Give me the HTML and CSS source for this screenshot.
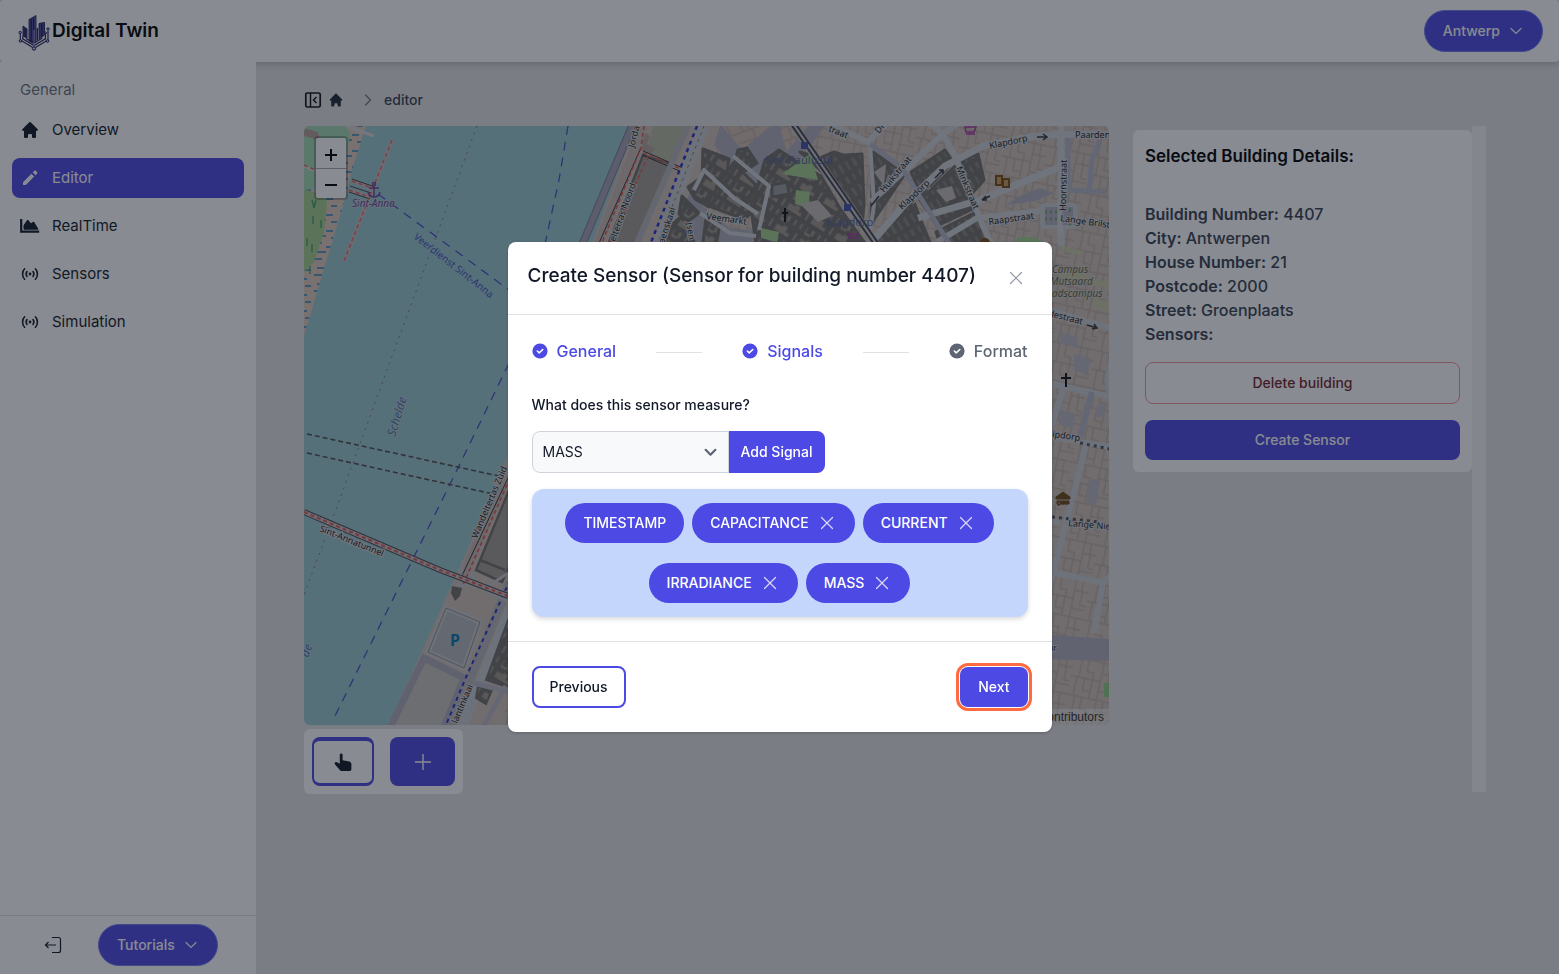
FILE: index.html
```html
<!DOCTYPE html>
<html lang="en">
<head>
<meta charset="utf-8">
<title>Digital Twin</title>
<link rel="stylesheet" href="styles.css">
</head>
<body>
<svg class="defs" width="0" height="0" aria-hidden="true">
  <symbol id="home" viewBox="0 0 20 20"><path d="M10.7 2.3a1 1 0 0 0-1.4 0l-7 7a1 1 0 0 0 1.4 1.4L4 10.4V17a1 1 0 0 0 1 1h2a1 1 0 0 0 1-1v-2a1 1 0 0 1 1-1h2a1 1 0 0 1 1 1v2a1 1 0 0 0 1 1h2a1 1 0 0 0 1-1v-6.6l.3.3a1 1 0 0 0 1.4-1.4l-7-7z" fill="currentColor"/></symbol>
  <symbol id="pencil" viewBox="0 0 20 20"><path d="M13.6 3.6a2 2 0 1 1 2.8 2.8l-.8.8-2.8-2.8.8-.8zM11.4 5.8 3 14.2V17h2.8l8.4-8.4-2.8-2.8z" fill="currentColor"/></symbol>
  <symbol id="chart" viewBox="0 0 20 20"><path d="M1.2 3v12.6h18" fill="none" stroke="currentColor" stroke-width="2.2"/><path d="M4 13.2V9.4L7.7 4l3.2 3.8 2.8-1.8L18 13.2z" fill="currentColor" stroke="currentColor" stroke-linejoin="round"/></symbol>
  <symbol id="signal" viewBox="0 0 20 20"><g fill="none" stroke="currentColor" stroke-width="1.6" stroke-linecap="round"><path d="M4.6 4.8a7.6 7.6 0 0 0 0 10.4M15.400 4.800a7.600 7.600 0 0 1 0 10.400M7 7.600a3.900 3.900 0 0 0 0 4.800M13 7.600a3.900 3.900 0 0 1 0 4.800"/></g><circle cx="10" cy="10" r="1.400" fill="currentColor"/></symbol>
  <symbol id="chevron" viewBox="0 0 16 16"><path d="m3 5.500 5 5 5-5" fill="none" stroke="currentColor" stroke-width="1.200" stroke-linecap="round"/></symbol>
  <symbol id="cross" viewBox="0 0 14 14"><path d="m1.500 1.500 11 11m0-11-11 11" fill="none" stroke="currentColor" stroke-width="1.200" stroke-linecap="round"/></symbol>
  <symbol id="check" viewBox="0 0 16 16"><circle cx="8" cy="8" r="7.600" fill="currentColor"/><path d="m5.300 8 1.900 1.900 3.600-3.400" fill="none" stroke="#fff" stroke-width="1.500" stroke-linecap="round" stroke-linejoin="round"/></symbol>
</svg>

<div class="app">
  <header class="topbar">
    <a class="brand" href="#">
      <svg class="logo" viewBox="0 0 32 36" aria-hidden="true">
        <path d="M11 4.500 18 .5V27l-2.500 1.500L11 26z" fill="#5a57b0" stroke="#1d1b52" stroke-width=".8"/>
        <path d="M13.200 4v23M15.500 2.600v25" stroke="#1d1b52" stroke-width="1.400"/>
        <path d="M5 11l4 3v9l-4-2zM21 8.500l5.500-1V20L21 24z" fill="#4a479c" stroke="#1d1b52" stroke-width=".9"/>
        <path d="M7 13v9M23.800 8.500V22M19.300 13v12" stroke="#1d1b52" stroke-width="1.300"/>
        <path d="M2.300 18v7L16 33.200 30 25v-9M4.800 21v2.800L16 30.500l11.400-6.700V18M8 23.500l8 4.500 8.500-5" fill="none" stroke="#24215e" stroke-width="1.200"/>
        <path d="M16 15v18" stroke="#b9b8ea" stroke-width=".8"/>
        <g fill="#c9c9ea" stroke="#24215e"><circle cx="2.200" cy="17.500" r="1.200"/><circle cx="30" cy="14" r="1.200"/><circle cx="27.500" cy="18" r="1"/><circle cx="2.500" cy="26" r="1.300"/><circle cx="29.500" cy="26" r="1.300"/><circle cx="16" cy="33.500" r="1.700"/></g>
      </svg>
      <span>Digital Twin</span>
    </a>
    <button class="pill" type="button">Antwerp <svg class="i16"><use href="#chevron"/></svg></button>
  </header>

  <aside class="sidebar">
    <nav class="nav" aria-label="Main">
      <h2>General</h2>
      <a href="#"><svg class="i20"><use href="#home"/></svg>Overview</a>
      <a href="#" class="active" aria-current="page"><svg class="i20"><use href="#pencil"/></svg>Editor</a>
      <a href="#"><svg class="i20"><use href="#chart"/></svg>RealTime</a>
      <a href="#"><svg class="i20"><use href="#signal"/></svg>Sensors</a>
      <a href="#"><svg class="i20"><use href="#signal"/></svg>Simulation</a>
    </nav>
    <div class="side-foot">
      <button class="bare" type="button" aria-label="Log out"><svg class="i18" viewBox="0 0 18 18"><path d="M8 1.500h6.500a2 2 0 0 1 2 2v11a2 2 0 0 1-2 2H8M1.500 9H12M4.500 6l-3 3 3 3" fill="none" stroke="currentColor" stroke-width="1.200"/></svg></button>
      <button class="pill" type="button">Tutorials <svg class="i16"><use href="#chevron"/></svg></button>
    </div>
  </aside>

  <main class="main">
    <nav class="crumbs" aria-label="Breadcrumb">
      <button class="bare" type="button" aria-label="Collapse sidebar"><svg class="i18" viewBox="0 0 18 18"><rect x="1.800" y="2" width="14.400" height="14" rx="1.500" fill="none" stroke="#111" stroke-width="1.700"/><path d="M6.500 2v14" stroke="#111" stroke-width="1.500"/><path d="M12.500 6 9.500 9l3 3" fill="none" stroke="#111" stroke-width="1.500"/></svg></button>
      <a class="home" href="#" aria-label="Home"><svg class="i16"><use href="#home"/></svg></a>
      <svg class="i16 sep"><use href="#chevron"/></svg>
      <span>editor</span>
    </nav>
    <div class="workspace">
      <section class="map-col">
        <div class="map">
<svg class="tiles" viewBox="304 126 805 599" preserveAspectRatio="xMidYMid slice" role="img" aria-label="Map of Antwerp">
  <defs>
    <pattern id="mud" width="26" height="16" patternUnits="userSpaceOnUse"><path d="M2 3h8M14 7h7M5 12h9M19 14h6" stroke="#2f86c0" stroke-width="1.300"/></pattern>
    <pattern id="parcel" width="44" height="38" patternUnits="userSpaceOnUse" patternTransform="rotate(12)"><path d="M0 1H44M0 20H30M8 1V20M15 1V13H22V20M30 1V38M37 1V12H44M30 12H38V26H44M6 20V38M14 20V32H22V38M22 20V32M30 30H44" fill="none" stroke="#b3a298" stroke-width="1"/></pattern>
    <pattern id="parcel2" width="34" height="40" patternUnits="userSpaceOnUse" patternTransform="rotate(-20)"><path d="M0 1H34M7 1V18M14 1V18M21 1V18M28 1V18M0 18H34M17 18V40M0 28H17M17 32H34" fill="none" stroke="#b3a298" stroke-width="1"/></pattern>
    <pattern id="dark" width="28" height="24" patternUnits="userSpaceOnUse" patternTransform="rotate(32)"><rect width="28" height="24" fill="#a0978c"/><path d="M0 2H28M0 13H18M5 0V13M12 2V24M19 0V24M25 0V10M19 15H28M5 18H12" fill="none" stroke="#706f6b" stroke-width="5"/></pattern>
    <pattern id="dark2" width="15" height="26" patternUnits="userSpaceOnUse" patternTransform="rotate(-30)"><rect width="15" height="26" fill="#8c877f"/><path d="M0 2H15M0 14H15M3 0V26M10 0V26" fill="none" stroke="#706f6b" stroke-width="5"/></pattern>
  </defs>
  <rect x="304" y="126" width="805" height="599" fill="#9bc8d1"/>

  <!-- left bank -->
  <path d="M304 126h62l-14 44-8 32-40 134z" fill="#decabd"/>
  <path d="M304 126h62l-14 44-8 32-40 134z" fill="url(#mud)"/>
  <path d="M304 126h42l4 8-5 32-20 22-21 2z" fill="#a5d8b4"/>
  <path d="M304 128l14 4 2 8-16-4z" fill="#b79f98"/>
  <path d="M304 190l12 2 11 8-3 32-10 30-10 10z" fill="#a5cf8c"/>
  <path d="M312 200l2 8 2-8m-3 16v8m8-4v8m-14 10v8m5-2v8m-2 14v8" stroke="#46996a" stroke-width="1.300" fill="none"/>
  <path d="M304 166l14 6m28-46l28 10" stroke="#d8d4d8" stroke-width="3"/>
  <path d="M392 140l-48 121M352 181l23 8m-26 1l21 7" stroke="#c6bdc2" stroke-width="4" fill="none"/>
  <path d="M352 179l23 8m-26 5l21 7m-20-13l21 7" stroke="#444" stroke-width="1" fill="none"/>
  <path d="M392 140l-48 121M352 181l23 8m-26 1l21 7M304 165l14 6" stroke="#e4655f" stroke-width="1.400" stroke-dasharray="4 3" fill="none"/>

  <!-- river routes -->
  <path d="M477 126L398 340 335 512 304 595" stroke="#856f93" stroke-width="1" stroke-dasharray="2 5" fill="none"/>
  <path d="M378 194L520 298M568 126l-9 54-18 82M530 320L457 470 332 722" stroke="#4a50c4" stroke-width="1.300" stroke-dasharray="9 7" fill="none"/>
  <path d="M307 434l210 46M307 453l200 44" stroke="#514d50" stroke-width="1.600" stroke-dasharray="5 3" fill="none"/>

  <!-- right bank -->
  <path d="M635 126H1109V725H388L420 655 463 560 508 455 560 330z" fill="#d0c3bb"/>
  <path d="M725 126H1109V725H500L600 420z" fill="url(#parcel)"/>
  <path d="M632 126l-52 124" stroke="#7d7b91" stroke-width="8"/><path d="M632 126l-52 124" stroke="#a6a3b4" stroke-width="6"/>
  <path d="M653 126h38l-18 36-27-9z" fill="#b8baa4"/>
  <path d="M645 132l5 4-3 8 8 4-4 6-10-4z" fill="#b5a69c"/>
  <path d="M644 126L596 250M508 475L461 580" stroke="#c8b8b2" stroke-width="9"/>
  <path d="M643 155l28 9-38 86h-27z" fill="#a39d96" stroke="#706f6b" stroke-width="2.500"/>
  <path d="M514 478l-38 92 26 12 20-44zM480 560l25 10" fill="#a39d96" stroke="#706f6b" stroke-width="2.500"/>
  <path d="M640 150L596 250M508 478L460 580M643 151l40 17M642 155l40 17" stroke="#333" stroke-width="1" fill="none"/>
  <path d="M644 126l-3 22-42 102M648 156l-42 94M643 153l38 16M510 478L463 585" stroke="#e05850" stroke-width="1.600" stroke-dasharray="4 3" fill="none"/>
  <path d="M704 126L655 250" stroke="#c9ccd0" stroke-width="11"/>
  <path d="M688 126L634 250" stroke="#b6b4bc" stroke-width="6"/>
  <path d="M697 126L648 250" stroke="#2c33c9" stroke-width="2.500" stroke-dasharray="4 4"/>
  <path d="M704 126L655 250" stroke="#8a7377" stroke-width="1" stroke-dasharray="3 4"/>
  <path d="M720 126h105l-18 25-34 42-25-10-34-38z" fill="#b0afbf"/>
  <path d="M722 126h48l-28 24z M780 126h28l-22 26z" fill="#d0bfb3"/>
  <path d="M722 126h48l-28 24z M780 126h28l-22 26z" fill="url(#parcel2)"/>
  <path d="M668 250l22-58 20 22 20 14 25 3-4 20z" fill="#aeadbd"/>

  <!-- highlighted buildings -->
  <g stroke="#706f6b" stroke-width="3" stroke-linejoin="round" fill="url(#dark)">
    <path d="M703 149l26 10-4 24-16 24-14-8-7-12 14-10z"/>
    <path d="M738 150l9-2 10 15-12 8-10-10zM733 163l23 22-2 26-10 8-38-14z"/>
    <path d="M682 196l17 17-12 9-8-8zM668 228l14-12 12 26-4 8h-28zM706 218l14 6-4 22-14 4z"/>
    <path d="M765 160l14-10 18 12 24 14 20 34 26 36-10 6h-100l-6-44z"/>
    <path d="M800 152l20 18 40 40-4-50-22-8-14 6z"/>
  </g>
  <g stroke="#706f6b" stroke-width="3" stroke-linejoin="round" fill="url(#dark2)">
    <path d="M830 156l32-2 2 50-2 22-30-50zM873 152l32 22-34 50zM911 172l34-22 8 12-32 33zM879 232l34-32 20 50h-60zM920 200l35-34 20 42-38 18zM960 160l18-6 6 26-16 18zM936 232l40-20 16 38h-50z"/>
  </g>
  <path d="M772 185l15-3 2 12-17 3z" fill="#9a9ea3" stroke="#706f6b" stroke-width="3"/>
  <path d="M782 174l28-20 8 26zM796 190l14 2-2 16-13-4zM761 228l18 4-2 10-16-4z" fill="#a5cf8c"/>
  <path d="M874 172l12-8-2 22zM936 190l16-4 4 12-10 4zM800 204l18-4 14 16-14 6z" fill="#c4bdb9"/>

  <!-- streets -->
  <g fill="none" stroke="#ced0d5" stroke-linejoin="round">
    <path stroke-width="7" d="M865 250l40-46 40-38 38-20 47-9 30-3 50 1M1061 126v120M1062 166l-82 34-62 18"/>
    <path stroke-width="6" d="M830 124l38 18 18-18M943 134l13 24 26 66 12 26M925 120l18 14 15-10M943 134l-72 68M937 242l40-24 64-7M1040 210h28"/>
    <path stroke-width="4" d="M694 190l10-20 30 28 24 16M733 156l36 30-10 44M700 213l30 20 26 3M870 143l4 62-4 26"/>
    <path stroke-width="5" stroke="#b4b5c5" d="M870 144l32 24 50 80M1068 138v52l38 2M1100 140l-8 20-3 30"/>
  </g>
  <path d="M790 120L880 250" stroke="#c6c6cd" stroke-width="8"/>
  <path d="M788 120L878 250M793 120L883 250" stroke="#45444a" stroke-width="2"/>
  <path d="M801 142h7v7h-7zM844 204h7v7h-7z" fill="#4550a8"/>
  <rect x="1040" y="203" width="38" height="26" rx="5" fill="#c9ccd2"/><path d="M1045 207h28v18h-28z" fill="#b0afbf"/><path d="M1045 212h12m-12 7h12m12-9h5m-5 14h6" stroke="#76a578" stroke-width="3" stroke-dasharray="2 3"/><path d="M1060 200v34" stroke="#d3d5d9" stroke-width="5"/>
  <path d="M1018 237h16l16 8h-36z" fill="#a5cf8c"/>
  <path d="M1020 196l20-8 14 5-18 8-30 4z" fill="#b0afbf"/>

  <!-- east side -->
  <path d="M1062 246l22 5-1 5-22-5zM1080 276l30 6v6l-30-5zM1064 268l26 8-6 10-26-10zM1094 298l16 5v9l-18-6z" fill="#c9c8a6"/>
  <g fill="#b8b7c2"><path d="M1061 332l16 5 2 10-18-3zM1074 354l16 4-2 16-14-4zM1060 410l16 4-3 14-14-3zM1098 404l8 2-2 12-8-2zM1090 478l10 3-4 24-9-3z"/></g>
  <g fill="none" stroke="#cacdd1" stroke-width="6">
    <path d="M1040 308l70 20M1040 381l70 16-2-20 6-30M1064 387l-13 40M1040 435l70 12M1086 445l-20 78-18 70M1040 520l20 2M1040 570l63 13 10-10M1103 583l-9 50"/>
    <path stroke="#b4b5c5" d="M1092 392l-13 48"/>
  </g>
  <path d="M1080 443l30 6M1052 517l46 5" stroke="#55555a" stroke-width="3" stroke-dasharray="3 4"/>
  <path d="M1040 634l70 5v22l-70-2z" fill="#b0afbf"/>
  <path d="M1104 683h6v14h-6z" fill="#8dcc84"/>

  <!-- south quay -->
  <path d="M446 608l34 14-16 46-36-16z" fill="#b4b9bf" stroke="#c9ccd0" stroke-width="5"/>
  <path d="M446 608l34 14-16 46-36-16z" fill="none" stroke="#918b8b" stroke-width="1"/>
  <path d="M388 732l36-74 40 20-22 54" fill="#c6c4c0" stroke="#aeadbd" stroke-width="7"/>
  <path d="M448 732l62-150" stroke="#b6b4bc" stroke-width="9"/>
  <path d="M460 732l68-166" stroke="#c9ccd0" stroke-width="10"/>
  <path d="M510 580l-43 95-24 57" fill="none" stroke="#2c33c9" stroke-width="2" stroke-dasharray="4 4"/>
  <path d="M463 560l-4 26 14-2 36 18M470 575l6 12 14-2 18-12M473 572l2 16" stroke="#c7c7ca" stroke-width="3" fill="none"/>
  <path d="M452 586l10 2-2 8-5 5-4-8z" fill="#706f6b"/>
  <path d="M508 620l-22 60 30 10v-70zM478 686l14 4-6 14-10-6z" fill="url(#dark)" stroke="#706f6b" stroke-width="2"/>
  <path d="M474 683l38 10M480 732l26-46" stroke="#b8b7c6" stroke-width="5"/>
  <path d="M304 512l136 58 68 26" stroke="#4d494d" stroke-width="6" fill="none"/>
  <path d="M304 512l136 58 68 26" stroke="#c8bfc4" stroke-width="4" fill="none"/>
  <path d="M304 512l136 58 68 26" stroke="#e05850" stroke-width="2" stroke-dasharray="4 3" fill="none"/>

  <g class="street">
    <text transform="translate(319 531) rotate(22)">Sint-Annatunnel</text>
    <text transform="translate(477 539) rotate(-67)">Wandeltertas Zuid</text>
    <text transform="translate(615 242) rotate(-70)">elterras Noord</text>
    <text transform="translate(634 148) rotate(-75)">Jorda</text>
    <text transform="translate(664 244) rotate(-72)">aenskaai</text>
    <text transform="translate(457 724) rotate(-67)">lantinkaai</text>
    <text transform="translate(706 219) rotate(8)">Veemarkt</text>
    <text transform="translate(686 223) rotate(80)">Jsen</text>
    <text transform="translate(828 131) rotate(22)">traat</text>
    <text transform="translate(879 134) rotate(-52)">Di</text>
    <text transform="translate(902 210) rotate(-43)">Klapdorp</text>
    <text transform="translate(884 193) rotate(-50)">Huikstraat</text>
    <text transform="translate(956 168) rotate(67)">Minkstraat</text>
    <text transform="translate(990 149) rotate(-12)">Klapdorp</text>
    <text x="1075" y="138">Paarden</text>
    <text transform="translate(989 225) rotate(-8)">Raapstraat</text>
    <text transform="translate(1066 211) rotate(-89)">Hoornstraat</text>
    <text transform="translate(1060 221) rotate(8)">Lange Brilst</text>
    <text transform="translate(1048 316) rotate(14)">destraat</text>
    <text transform="translate(1052 437) rotate(8)">ipdorp</text>
    <text transform="translate(1068 526) rotate(5)">Lange Nie</text>
    <text x="1051" y="651">ir</text>
  </g>
  <path d="M935 178l8-8m-4 0h4v4M871 206l8-10M1037 137h10m-4-3l4 3-4 3M982 200l8-4m-8 4l4-4m-4 4l5 0M1087 325l10 3m-3-4l3 4-5 1" stroke="#34343a" stroke-width="1.500" fill="none"/>
  <g class="place">
    <text class="violet" x="352" y="207">Sint-Anna</text>
    <text class="blue" transform="translate(413 238) rotate(38)">Veerdienst Sint-Anna</text>
    <text class="river" transform="translate(395 437) rotate(-73)">Schelde</text>
    <text class="river" transform="translate(308 658) rotate(-68)">de</text>
    <text class="campus" x="1052" y="273">Campus</text>
    <text class="campus" x="1050" y="285">Mutsaard</text>
    <text class="campus" x="1052" y="297">adscampus</text>
  </g>
  <g class="station"><text x="765" y="164">Sint-Pauluspl</text><text x="826" y="226">Klapdorp</text></g>
  <text class="parking" x="450" y="646">P</text>
  <g fill="none" stroke="#6c4a99" stroke-width="1.500"><path d="M374 185v11m-5-8h10m-11 4q1 5 6 5 5 0 6-5"/><circle cx="374" cy="184" r="1.500"/></g>
  <path d="M1066 373v14m-5-9h10M785 208v14m-3-9h6" stroke="#111" stroke-width="2"/>
  <path d="M1056 497l7-5 7 5v2h-14zm1 4h12v3h-12zm0 4h3v-4m3 4v-4m3 4v-4" fill="#6d4a16" stroke="#6d4a16"/>
  <path d="M996 176h6v9h-6zm7 3h6v8h-6z" fill="#c89a5c" stroke="#7a4b12" stroke-width="2"/>
  <path d="M965 127h11l-2 5h-8zm1 7h9M848 234h10l-1 4h-8z" fill="none" stroke="#a53da0" stroke-width="1.600"/>
  <circle cx="985" cy="243" r="5" fill="#7a4b12"/>
</svg>
          <div class="zoomer">
            <button type="button" aria-label="Zoom in"><svg viewBox="0 0 12 12"><path d="M6 0v12M0 6h12" stroke="#000" stroke-width="2"/></svg></button>
            <button type="button" aria-label="Zoom out"><svg viewBox="0 0 12 12"><path d="M0 6h12" stroke="#000" stroke-width="2"/></svg></button>
          </div>
          <div class="credit">Leaflet | © OpenStreetMap contributors</div>
        </div>
        <div class="tools">
          <button class="tool outline" type="button" aria-label="Select"><svg class="i20" viewBox="0 0 20 20"><path d="M8.200 1.500c.8 0 1.400.6 1.400 1.400v5.300l6.600 1.300c1.400.3 2.200 1.300 2.200 2.600v5.200c0 .8-.6 1.700-1.500 1.700H8.600c-.5 0-1-.3-1.300-.6L2 12.600c-1-1.500.5-3 2-2.300l2.800 1.500V2.900c0-.8.600-1.400 1.400-1.400z" fill="currentColor"/></svg></button>
          <button class="tool" type="button" aria-label="Add"><svg class="i20" viewBox="0 0 20 20"><path d="M10 2v16M2 10h16" stroke="currentColor" stroke-width="1.400"/></svg></button>
        </div>
      </section>

      <section class="details-scroll">
        <div class="details">
          <h3>Selected Building Details:</h3>
          <ul>
            <li><b>Building Number:</b> 4407</li>
            <li><b>City:</b> Antwerpen</li>
            <li><b>House Number:</b> 21</li>
            <li><b>Postcode:</b> 2000</li>
            <li><b>Street:</b> Groenplaats</li>
            <li><b>Sensors:</b></li>
          </ul>
          <button class="danger" type="button">Delete building</button>
          <button class="primary" type="button">Create Sensor</button>
        </div>
        <div class="track"></div>
      </section>
    </div>
  </main>
</div>

<div class="backdrop">
  <section class="modal" role="dialog" aria-modal="true" aria-labelledby="title">
    <header class="modal-head">
      <h1 id="title">Create Sensor (Sensor for building number 4407)</h1>
      <button class="close" type="button" aria-label="Close"><svg class="i14"><use href="#cross"/></svg></button>
    </header>
    <div class="modal-body">
      <ol class="steps">
        <li class="done"><svg class="i16"><use href="#check"/></svg>General</li>
        <li class="line" aria-hidden="true"></li>
        <li class="done"><svg class="i16"><use href="#check"/></svg>Signals</li>
        <li class="line" aria-hidden="true"></li>
        <li><svg class="i16"><use href="#check"/></svg>Format</li>
      </ol>
      <label class="question" for="measure">What does this sensor measure?</label>
      <div class="picker">
        <div class="select-wrap">
          <select id="measure"><option>MASS</option><option>CURRENT</option><option>IRRADIANCE</option></select>
          <svg class="arrow" viewBox="0 0 12 12" aria-hidden="true"><path d="m1.500 3.500 4.500 4.500 4.500-4.500" fill="none" stroke="#5b6472" stroke-width="2" stroke-linecap="round" stroke-linejoin="round"/></svg>
        </div>
        <button class="add" type="button">Add Signal</button>
      </div>
      <div class="chips">
        <button class="chip" type="button">TIMESTAMP</button>
        <button class="chip" type="button">CAPACITANCE <svg class="i14"><use href="#cross"/></svg></button>
        <button class="chip" type="button">CURRENT <svg class="i14"><use href="#cross"/></svg></button>
        <button class="chip" type="button">IRRADIANCE <svg class="i14"><use href="#cross"/></svg></button>
        <button class="chip" type="button">MASS <svg class="i14"><use href="#cross"/></svg></button>
      </div>
    </div>
    <footer class="modal-foot">
      <button class="prev" type="button">Previous</button>
      <button class="next" type="button">Next</button>
    </footer>
  </section>
</div>
</body>
</html>
```
FILE: styles.css
```css
:root {
  --indigo: #4c49e4;
  --ink: #111827;
  --line: #e0e1e5;
}
* { box-sizing: border-box; }
body {
  margin: 0;
  background: #e3e4e4;
  color: var(--ink);
  font: 16px/24px Inter, "Liberation Sans", sans-serif;
}
h1, h2, h3, ul, ol { margin: 0; padding: 0; font-weight: 500; }
ul, ol { list-style: none; }
a { color: inherit; text-decoration: none; }
button { font: 500 14px/20px Inter, "Liberation Sans", sans-serif; color: inherit; cursor: pointer; padding: 0; border: 0; background: none; }
svg { flex: none; }
.defs { position: absolute; }
.i14 { width: 14px; height: 14px; }
.i16 { width: 16px; height: 16px; }
.i18 { width: 18px; height: 18px; display: block; }
.i20 { width: 20px; height: 20px; display: block; }

.app {
  display: grid;
  grid-template: auto 1fr / 256px 1fr;
  min-height: 100vh;
}
.topbar {
  grid-column: 1 / -1;
  display: flex;
  align-items: center;
  justify-content: space-between;
  height: 62px;
  padding: 0 16px 0 18px;
  background: #fff;
  border-radius: 4px;
  box-shadow: 0 2px 6px rgba(0, 0, 0, .2);
}
.brand { display: flex; align-items: center; gap: 2px; font-size: 19px; font-weight: 600; color: #000; }
.logo { width: 32px; height: 36px; margin-top: 4px; }
.pill {
  display: flex;
  align-items: center;
  gap: 8px;
  height: 42px;
  padding: 0 18px;
  border: 1px solid #6f7ff0;
  border-radius: 21px;
  background: var(--indigo);
  color: #fff;
}

.sidebar {
  position: relative;
  display: flex;
  flex-direction: column;
  justify-content: space-between;
  background: #fff;
}
.nav { display: flex; flex-direction: column; gap: 8px; padding: 16px 12px; font-size: 15px; }
.nav h2 { padding: 0 8px; font-size: 15px; line-height: 24px; font-weight: 400; color: #6b7280; }
.nav a { display: flex; align-items: center; gap: 12px; height: 40px; padding: 0 8px; border-radius: 8px; }
.nav .active { background: var(--indigo); color: #fff; }
.side-foot {
  display: flex;
  align-items: center;
  gap: 36px;
  padding: 8px 36px 8px 44px;
  border-top: 1px solid #dfe1e4;
}

.main { padding: 28px 73px 0 48px; min-width: 0; }
.bare { display: block; }
.crumbs { display: flex; align-items: center; height: 20px; gap: 6px; margin-bottom: 16px; font-size: 14px; line-height: 20px; font-weight: 500; color: #374151; }
.home { display: flex; color: #1f2937; }
.sep { transform: rotate(-90deg); margin-left: 10px; color: #6b7280; }
.crumbs span { padding-left: 2px; }
.workspace { display: flex; gap: 24px; align-items: flex-start; }
.map-col { flex: 1; min-width: 0; display: flex; flex-direction: column; align-items: flex-start; gap: 4px; }
.map { position: relative; width: 100%; height: 599px; border-radius: 6px; overflow: hidden; }
.tiles { display: block; width: 100%; height: 100%; }
.tiles text { font: 9px "Noto Sans", sans-serif; paint-order: stroke; stroke: #d2d2d5; stroke-width: 2px; fill: #1c1c20; }
.tiles .station text { font-size: 11px; stroke: none; fill: #56609c; }
.tiles .place text { font-size: 10px; font-style: italic; stroke-width: 1px; }
.tiles .place .violet { fill: #63408f; }
.tiles .place .blue { font-style: normal; fill: #4753be; stroke: none; }
.tiles .place .river { fill: #3f71aa; font-size: 12px; }
.tiles .place .campus { fill: #5f5f33; }
.tiles .parking { font: 700 16px "Noto Sans", sans-serif; fill: #0079b5; stroke: none; }
.zoomer {
  position: absolute;
  top: 10px;
  left: 10px;
  border: 2px solid rgba(0, 0, 0, .25);
  border-radius: 4px;
  overflow: hidden;
}
.zoomer button { display: grid; place-items: center; width: 30px; height: 30px; padding-top: 3px; background: #fff; }
.zoomer button + button { border-top: 1px solid #aaa; }
.zoomer svg { width: 12px; height: 12px; }
.credit { position: absolute; right: 0; bottom: 0; padding: 0 5px; background: rgba(255, 255, 255, .4); font: 12px/16px "Liberation Sans", sans-serif; color: #333; }

.tools { display: flex; gap: 16px; padding: 8px; border-radius: 6px; background: #fff; }
.tool { display: grid; place-items: center; width: 65px; height: 49px; border-radius: 8px; background: var(--indigo); color: #fff; }
.tool.outline { width: 62px; border: solid var(--indigo); border-width: 4px 2px 3px; background: #fff; color: var(--ink); }

.details-scroll { display: flex; width: 353px; height: 666px; }
.details {
  flex: 1;
  align-self: flex-start;
  display: flex;
  flex-direction: column;
  margin-top: 4px;
  padding: 12px;
  border-radius: 6px;
  background: #fff;
}
.track { width: 14px; background: #f4f5f6; }
.details h3 { margin: 0 0 32px; font-size: 17px; line-height: 28px; font-weight: 600; color: #000; }
.details ul { margin-bottom: 16px; color: #374151; }
.details b { font-weight: 600; }
.details button { border-radius: 8px; }
.danger { height: 42px; margin-bottom: 16px; border: 1px solid #ee9696; color: #741f2a; }
.primary { height: 40px; background: var(--indigo); color: #fff; }

.backdrop {
  position: fixed;
  inset: 0;
  display: grid;
  place-items: center;
  background: rgba(17, 24, 35, .5);
}
.modal { width: 544px; border-radius: 8px; background: #fff; box-shadow: 0 1px 3px rgba(0, 0, 0, .2); }
.modal-head {
  display: flex;
  align-items: flex-start;
  justify-content: space-between;
  padding: 20px 20px 24px;
  border-bottom: 1px solid var(--line);
}
.modal-head h1 { font-size: 19px; line-height: 28px; font-weight: 500; }
.close { display: grid; place-items: center; width: 32px; height: 32px; color: #9298a3; }
.modal-head .close { margin-bottom: -4px; }
.modal-body { padding: 24px; }
.steps { display: flex; align-items: center; color: #5f6673; font-weight: 500; }
.steps li { display: flex; align-items: center; gap: 9px; }
.steps .done { color: var(--indigo); }
.steps .line { flex: 1; height: 1px; margin: 2px 40px 0; background: var(--line); }
.question { display: block; margin: 32px 0 16px; font-size: 14px; line-height: 20px; font-weight: 500; }
.picker { display: flex; height: 42px; }
.select-wrap { position: relative; width: 197px; }
.select-wrap select {
  appearance: none;
  width: 100%;
  height: 100%;
  padding: 0 32px 0 10px;
  border: 1px solid #cfd3da;
  border-radius: 8px 0 0 8px;
  background: #f8f9fb;
  color: var(--ink);
  font: 14px/20px Inter, "Liberation Sans", sans-serif;
}
.arrow { position: absolute; right: 12px; top: 15px; width: 13px; height: 13px; pointer-events: none; }
.add { padding: 0 12px; border-radius: 0 8px 8px 0; background: var(--indigo); color: #fff; }
.chips {
  display: flex;
  flex-wrap: wrap;
  justify-content: center;
  gap: 20px 8px;
  margin-top: 16px;
  padding: 14px 24px;
  border-radius: 12px;
  background: #c5d6fd;
  box-shadow: 0 2px 5px rgba(0, 0, 0, .16);
}
.chip {
  display: flex;
  align-items: center;
  gap: 11px;
  height: 40px;
  padding: 0 18px;
  border-radius: 20px;
  background: var(--indigo);
  color: #fff;
}
.chip svg { margin-right: 3px; color: #dcdcfa; }
.modal-foot { display: flex; align-items: center; justify-content: space-between; padding: 24px; border-top: 1px solid var(--line); }
.prev { height: 42px; padding: 0 16px; border: 2px solid var(--indigo); border-radius: 8px; }
.next { height: 40px; padding: 0 18px; border-radius: 8px; background: var(--indigo); color: #fff; outline: 3px solid #ff6b40; outline-offset: 1px; }
```
